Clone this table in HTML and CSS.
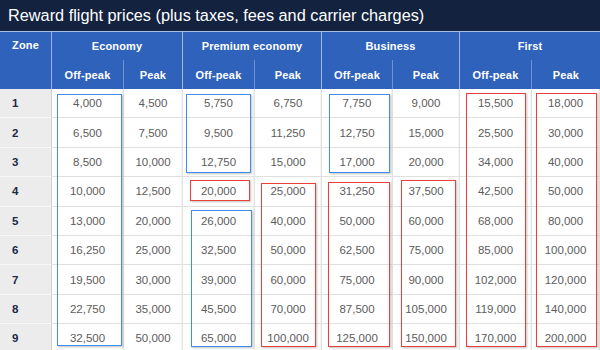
FILE: index.html
```html
<!DOCTYPE html>
<html>
<head>
<meta charset="utf-8">
<link rel="stylesheet" href="styles.css">
</head>
<body>
<div class="page">
  <div class="title">Reward flight prices (plus taxes, fees and carrier charges)</div>
  <div class="grid">
    <div class="hd zone-hd">Zone</div>
    <div class="hd grp">Economy</div>
    <div class="hd grp">Premium economy</div>
    <div class="hd grp">Business</div>
    <div class="hd grp last">First</div>
    <div class="hd sub">Off-peak</div><div class="hd sub grpend">Peak</div>
    <div class="hd sub">Off-peak</div><div class="hd sub grpend">Peak</div>
    <div class="hd sub">Off-peak</div><div class="hd sub grpend">Peak</div>
    <div class="hd sub">Off-peak</div><div class="hd sub last">Peak</div>

    <div class="zn">1</div><div class="c">4,000</div><div class="c">4,500</div><div class="c">5,750</div><div class="c">6,750</div><div class="c">7,750</div><div class="c">9,000</div><div class="c">15,500</div><div class="c">18,000</div>
    <div class="zn">2</div><div class="c">6,500</div><div class="c">7,500</div><div class="c">9,500</div><div class="c">11,250</div><div class="c">12,750</div><div class="c">15,000</div><div class="c">25,500</div><div class="c">30,000</div>
    <div class="zn">3</div><div class="c">8,500</div><div class="c">10,000</div><div class="c">12,750</div><div class="c">15,000</div><div class="c">17,000</div><div class="c">20,000</div><div class="c">34,000</div><div class="c">40,000</div>
    <div class="zn">4</div><div class="c">10,000</div><div class="c">12,500</div><div class="c">20,000</div><div class="c">25,000</div><div class="c">31,250</div><div class="c">37,500</div><div class="c">42,500</div><div class="c">50,000</div>
    <div class="zn">5</div><div class="c">13,000</div><div class="c">20,000</div><div class="c">26,000</div><div class="c">40,000</div><div class="c">50,000</div><div class="c">60,000</div><div class="c">68,000</div><div class="c">80,000</div>
    <div class="zn">6</div><div class="c">16,250</div><div class="c">25,000</div><div class="c">32,500</div><div class="c">50,000</div><div class="c">62,500</div><div class="c">75,000</div><div class="c">85,000</div><div class="c">100,000</div>
    <div class="zn">7</div><div class="c">19,500</div><div class="c">30,000</div><div class="c">39,000</div><div class="c">60,000</div><div class="c">75,000</div><div class="c">90,000</div><div class="c">102,000</div><div class="c">120,000</div>
    <div class="zn">8</div><div class="c">22,750</div><div class="c">35,000</div><div class="c">45,500</div><div class="c">70,000</div><div class="c">87,500</div><div class="c">105,000</div><div class="c">119,000</div><div class="c">140,000</div>
    <div class="zn">9</div><div class="c">32,500</div><div class="c">50,000</div><div class="c">65,000</div><div class="c">100,000</div><div class="c">125,000</div><div class="c">150,000</div><div class="c">170,000</div><div class="c">200,000</div>
  </div>

  <div class="box blue b-eco-off"></div>
  <div class="box blue b-prem-off-top"></div>
  <div class="box blue b-bus-off-top"></div>
  <div class="box blue b-prem-off-bot"></div>
  <div class="box red b-first-off"></div>
  <div class="box red b-first-peak"></div>
  <div class="box red b-prem-off-4"></div>
  <div class="box red b-prem-peak"></div>
  <div class="box red b-bus-off-bot"></div>
  <div class="box red b-bus-peak"></div>
</div>
</body>
</html>
```
FILE: styles.css
```css
html, body {
  margin: 0;
  padding: 0;
  background: #ffffff;
}
body {
  width: 600px;
  height: 350px;
  overflow: hidden;
  font-family: "Liberation Sans", Arial, sans-serif;
}
.page {
  position: relative;
  width: 600px;
}
.title {
  box-sizing: border-box;
  height: 32px;
  background: #13223f;
  color: #ffffff;
  font-size: 16.3px;
  line-height: 31px;
  padding-left: 8px;
  border-bottom: 1px solid #a7bde6;
}
.grid {
  display: grid;
  grid-template-columns: 52px 72px 59px 72px 67px 71px 67px 72px 68px;
  grid-template-rows: 28px 29px repeat(9, 29.4px);
}
.grid > div {
  box-sizing: border-box;
  display: flex;
  align-items: center;
  justify-content: center;
}
.hd {
  background: #2f62bb;
  color: #ffffff;
  font-weight: bold;
  font-size: 11px;
  letter-spacing: 0.15px;
  border-right: 1px solid #7f9fd8;
}
.zone-hd {
  grid-row: span 2;
  align-items: flex-start !important;
  padding-top: 7px;
  border-right: 1px solid #9fb6e4;
}
.grp {
  grid-column: span 2;
  border-right: 1px solid #9fb6e4;
}
.grp.last, .sub.last {
  border-right: none;
}
.sub {
  border-right: 1px solid #6f92d2;
}
.sub.grpend {
  border-right: 1px solid #9fb6e4;
}
.zn {
  background: #ececec;
  color: #1b2947;
  font-weight: bold;
  font-size: 11.5px;
  justify-content: flex-start !important;
  padding-left: 12px;
  border-right: 1px solid #d2d2d2;
  border-bottom: 1px solid #f7f7f7;
}
.c {
  background: #ffffff;
  color: #5c5c5c;
  font-size: 11.5px;
  border-right: 1px solid #e2e2e2;
  border-bottom: 1px solid #e0e0e0;
  box-shadow: inset -1px 0 0 #f4f4f4;
}
.box {
  position: absolute;
  box-sizing: border-box;
  border: 1px solid;
  box-shadow: 1px 1px 2px rgba(0, 0, 0, 0.25);
}
.blue { border-color: #3f8ded; }
.red { border-color: #ea4038; }

.b-eco-off      { left: 57px;  top: 94px;  width: 65px; height: 252px; }
.b-prem-off-top { left: 186px; top: 94px;  width: 65px; height: 79px; }
.b-bus-off-top  { left: 329px; top: 94px;  width: 61px; height: 79px; }
.b-prem-off-bot { left: 191px; top: 210px; width: 61px; height: 137px; }
.b-first-off    { left: 466px; top: 93px;  width: 60px; height: 254px; }
.b-first-peak   { left: 536px; top: 93px;  width: 61px; height: 254px; }
.b-prem-off-4   { left: 190px; top: 180px; width: 60px; height: 21px; }
.b-prem-peak    { left: 261px; top: 183px; width: 55px; height: 164px; }
.b-bus-off-bot  { left: 328px; top: 182px; width: 62px; height: 165px; }
.b-bus-peak     { left: 401px; top: 180px; width: 55px; height: 167px; }
```
